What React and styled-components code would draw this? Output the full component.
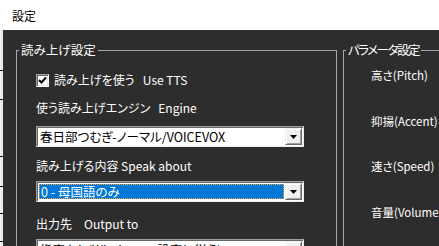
import React from "react";
import styled, { createGlobalStyle } from "styled-components";

const GlobalStyle = createGlobalStyle`
  html, body {
    margin: 0;
    padding: 0;
    background: #2d2d2d;
    overflow: hidden;
  }
  body {
    font-family: "Noto Sans CJK JP", "Noto Sans", sans-serif;
    font-size: 12px;
    font-feature-settings: "palt";
  }
`;

const Window = styled.div`
  width: 439px;
  height: 246px;
  display: flex;
  flex-direction: column;
  overflow: hidden;
`;

const TitleBar = styled.div`
  height: 30px;
  flex-shrink: 0;
  background: #ffffff;
  color: #000;
  display: flex;
  align-items: center;
  padding-left: 12px;
  font-feature-settings: normal;
`;

const Client = styled.div`
  flex: 1;
  min-height: 0;
  display: flex;
  background: #2d2d2d;
  overflow: hidden;
`;

// edge of the window lying behind this one
const BehindEdge = styled.div`
  width: 3px;
  flex-shrink: 0;
  background:
    linear-gradient(#111, #111) 0 40px / 3px 1px no-repeat,
    linear-gradient(#111, #111) 0 69px / 3px 1px no-repeat,
    linear-gradient(#111, #111) 0 126px / 3px 1px no-repeat,
    linear-gradient(#111, #111) 0 156px / 3px 1px no-repeat,
    linear-gradient(#111, #111) 0 183px / 3px 1px no-repeat,
    linear-gradient(#111, #111) 0 211px / 3px 1px no-repeat,
    #ececec;
`;

const Panels = styled.div`
  flex: 1;
  min-width: 0;
  display: flex;
  gap: 6px;
  padding: 12px 0 0 13px;
  overflow: hidden;
`;

const Group = styled.fieldset`
  margin: 0;
  padding: 0;
  min-width: 0;
  flex-shrink: 0;
  width: ${(p) => p.$width}px;
  box-sizing: border-box;
  border: 1px solid #a8a8a8;
  border-bottom: none;
`;

const Legend = styled.legend`
  margin-left: 2px;
  padding: 0 2px;
  line-height: 16px;
  font-size: 12.5px;
  letter-spacing: ${(p) => p.$spacing || 0}px;
  color: #ffffff;
`;

const Column = styled.div`
  display: flex;
  flex-direction: column;
  align-items: flex-start;
  padding: ${(p) => p.$pad};
  gap: ${(p) => p.$gap || 0}px;
  font-size: ${(p) => p.$size || 12}px;
`;

const Text = styled.div`
  height: 16px;
  line-height: 16px;
  color: #ffffff;
  white-space: pre;
  margin-top: ${(p) => p.$top || 0}px;
`;

const CheckRow = styled.label`
  height: 16px;
  display: flex;
  align-items: center;
  gap: 5px;
  color: #ffffff;
  white-space: pre;
  line-height: 16px;
`;

const CheckBox = styled.span`
  width: 13px;
  height: 13px;
  box-sizing: border-box;
  background: #ffffff;
  border: 1px solid;
  border-color: #a0a0a0 #ffffff #ffffff #a0a0a0;
  box-shadow: inset 1px 1px 0 #696969, inset -1px -1px 0 #e3e3e3;
  display: flex;
  align-items: center;
  justify-content: center;
`;

const Combo = styled.div`
  width: 268px;
  height: 21px;
  box-sizing: border-box;
  margin-top: ${(p) => p.$top || 0}px;
  display: flex;
  background: #ffffff;
  border: 1px solid;
  border-color: #a0a0a0 #ececec #ececec #a0a0a0;
  padding: 1px;
  box-shadow: inset 1px 1px 0 #696969;
`;

const ComboValue = styled.div`
  flex: 1;
  min-width: 0;
  display: flex;
  align-items: center;
  box-sizing: border-box;
  margin: ${(p) => (p.$selected ? "1px" : "0")};
  padding-left: ${(p) => (p.$selected ? "1px" : "2px")};
  background: ${(p) => (p.$selected ? "#0078d7" : "transparent")};
  color: ${(p) => (p.$selected ? "#ffffff" : "#000000")};
  border: ${(p) => (p.$selected ? "1px dotted #ffa53a" : "none")};
  white-space: pre;
  line-height: 13px;
  font-size: 12.5px;
`;

const DropButton = styled.div`
  width: 17px;
  flex-shrink: 0;
  box-sizing: border-box;
  background: #f0f0f0;
  border: 1px solid;
  border-color: #f0f0f0 #696969 #696969 #f0f0f0;
  box-shadow: inset 1px 1px 0 #ffffff, inset -1px -1px 0 #a0a0a0;
  display: flex;
  align-items: center;
  justify-content: center;
`;

const Arrow = () => (
  <svg width="7" height="4" viewBox="0 0 7 4">
    <polygon points="0,0 7,0 3.5,4" fill="#000" />
  </svg>
);

const Check = () => (
  <svg width="9" height="9" viewBox="0 0 9 9">
    <path d="M1 4 L3.5 6.5 L8 1.5" stroke="#000" strokeWidth="2" fill="none" />
  </svg>
);

const ComboBox = ({ value, selected, top }) => (
  <Combo $top={top}>
    <ComboValue $selected={selected}>{value}</ComboValue>
    <DropButton>
      <Arrow />
    </DropButton>
  </Combo>
);

export default function App() {
  return (
    <>
      <GlobalStyle />
      <Window>
        <TitleBar>設定</TitleBar>
        <Client>
          <BehindEdge />
          <Panels>
            <Group $width={321}>
              <Legend>読み上げ設定</Legend>
              <Column $pad="14px 0 0 19px">
                <CheckRow>
                  <CheckBox>
                    <Check />
                  </CheckBox>
                  {"読み上げを使う   Use TTS"}
                </CheckRow>
                <Text $top={12}>{"使う読み上げエンジン   Engine"}</Text>
                <ComboBox top={10} value="春日部つむぎ-ノーマル/VOICEVOX" />
                <Text $top={11}>{"読み上げる内容 Speak about"}</Text>
                <ComboBox top={7} value="0 - 母国語のみ" selected />
                <Text $top={14}>{"出力先　Output to"}</Text>
                <ComboBox top={7} value="指定なし(Windowsの設定に従う)" />
              </Column>
            </Group>
            <Group $width={150}>
              <Legend $spacing={-1.5}>パラメータ設定</Legend>
              <Column $pad="9px 0 0 27px" $gap={29.5} $size={11.5}>
                <Text>高さ(Pitch)</Text>
                <Text>抑揚(Accent)</Text>
                <Text>速さ(Speed)</Text>
                <Text>音量(Volume)</Text>
              </Column>
            </Group>
          </Panels>
        </Client>
      </Window>
    </>
  );
}
